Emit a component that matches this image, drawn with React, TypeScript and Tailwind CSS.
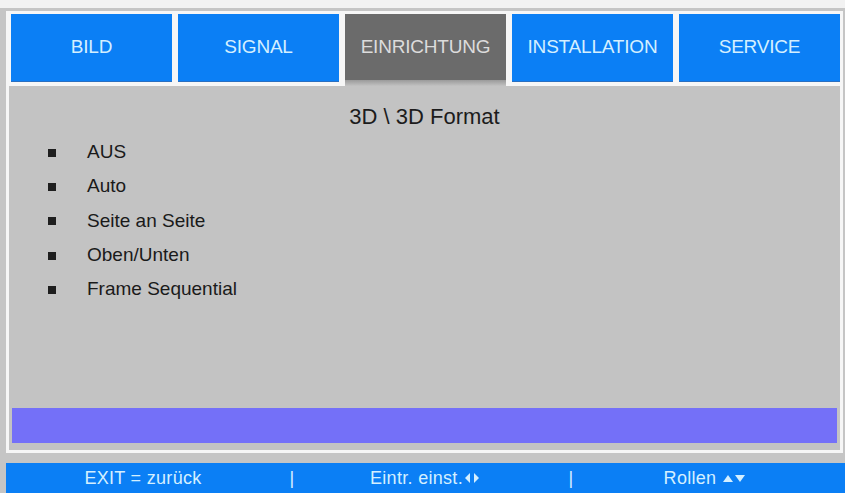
import React from "react";

const tabs = ["BILD", "SIGNAL", "EINRICHTUNG", "INSTALLATION", "SERVICE"];
const active = "EINRICHTUNG";

const options = ["AUS", "Auto", "Seite an Seite", "Oben/Unten", "Frame Sequential"];

const LeftRight = () => (
  <svg width="16" height="10" viewBox="0 0 16 10" className="ml-[1px] inline-block">
    <polygon points="6,0 6,10 1,5" fill="currentColor" />
    <polygon points="10,0 10,10 15,5" fill="currentColor" />
  </svg>
);

const UpDown = () => (
  <svg width="24" height="10" viewBox="0 0 24 10" className="ml-[6px] inline-block">
    <polygon points="1,9 11,9 6,2" fill="currentColor" />
    <polygon points="13,2 23,2 18,9" fill="currentColor" />
  </svg>
);

const App = () => {
  return (
    <div
      className="w-[845px] h-[493px] overflow-hidden bg-[#c5c5c5] flex flex-col"
      style={{ fontFamily: '"Liberation Sans", Arial, sans-serif' }}
    >
      {/* top light band */}
      <div className="h-[8px] bg-[#f2f2f2]" />
      <div className="h-[3px]" />

      {/* menu panel */}
      <div className="ml-[6px] mr-[2px] border-[3px] border-[#f6f6f6] flex flex-col h-[442px]">
        {/* tab row */}
        <div className="flex gap-[6px] pl-[2px] bg-[#f6f6f6] h-[72px]">
          {tabs.map((t) =>
            t === active ? (
              <div key={t} className="w-[161px] flex flex-col">
                <div className="h-[66px] bg-[#6b6b6b] flex items-center justify-center text-[19px] text-[#dcdcdc] tracking-[-0.2px]">
                  {t}
                </div>
                <div className="flex-1 bg-gradient-to-b from-[#9a9a9a] to-[#c2c2c2]" />
              </div>
            ) : (
              <div
                key={t}
                className="w-[161px] h-[68px] bg-[#0b7ff5] flex items-center justify-center text-[19px] text-[#d4efff] tracking-[-0.2px] border-b border-[#2a6fc0]"
              >
                {t}
              </div>
            )
          )}
        </div>

        {/* content */}
        <div className="flex-1 bg-[#c3c3c3] flex flex-col">
          <div className="h-[48px] flex items-end justify-center text-[22px] leading-none text-[#1c1c1c] pb-[6px]">
            3D \ 3D Format
          </div>
          <ul className="pl-[39px] pt-[1px] text-[19px] leading-[34.3px] text-[#1a1a1a]">
            {options.map((o) => (
              <li key={o} className="flex items-center">
                <span className="w-[8px] h-[8px] bg-[#1e1e1e] mr-[31px] mt-[1px]" />
                <span>{o}</span>
              </li>
            ))}
          </ul>
          <div className="flex-1" />
          <div className="mx-[3px] h-[35px] bg-[#7470f8]" />
          <div className="h-[7px]" />
        </div>
      </div>

      <div className="h-[10px]" />

      {/* status bar */}
      <div className="ml-[6px] flex-1 bg-[#0b7ff5] flex items-center text-[18px] text-[#d4efff] tracking-[0.3px]">
        <div className="w-[274px] text-center">EXIT = zurück</div>
        <div className="w-[24px] text-center">|</div>
        <div className="w-[242px] flex items-center justify-center">
          Eintr. einst.
          <LeftRight />
        </div>
        <div className="w-[50px] text-center">|</div>
        <div className="w-[218px] flex items-center justify-center">
          Rollen
          <UpDown />
        </div>
      </div>
    </div>
  );
};

export default App;
